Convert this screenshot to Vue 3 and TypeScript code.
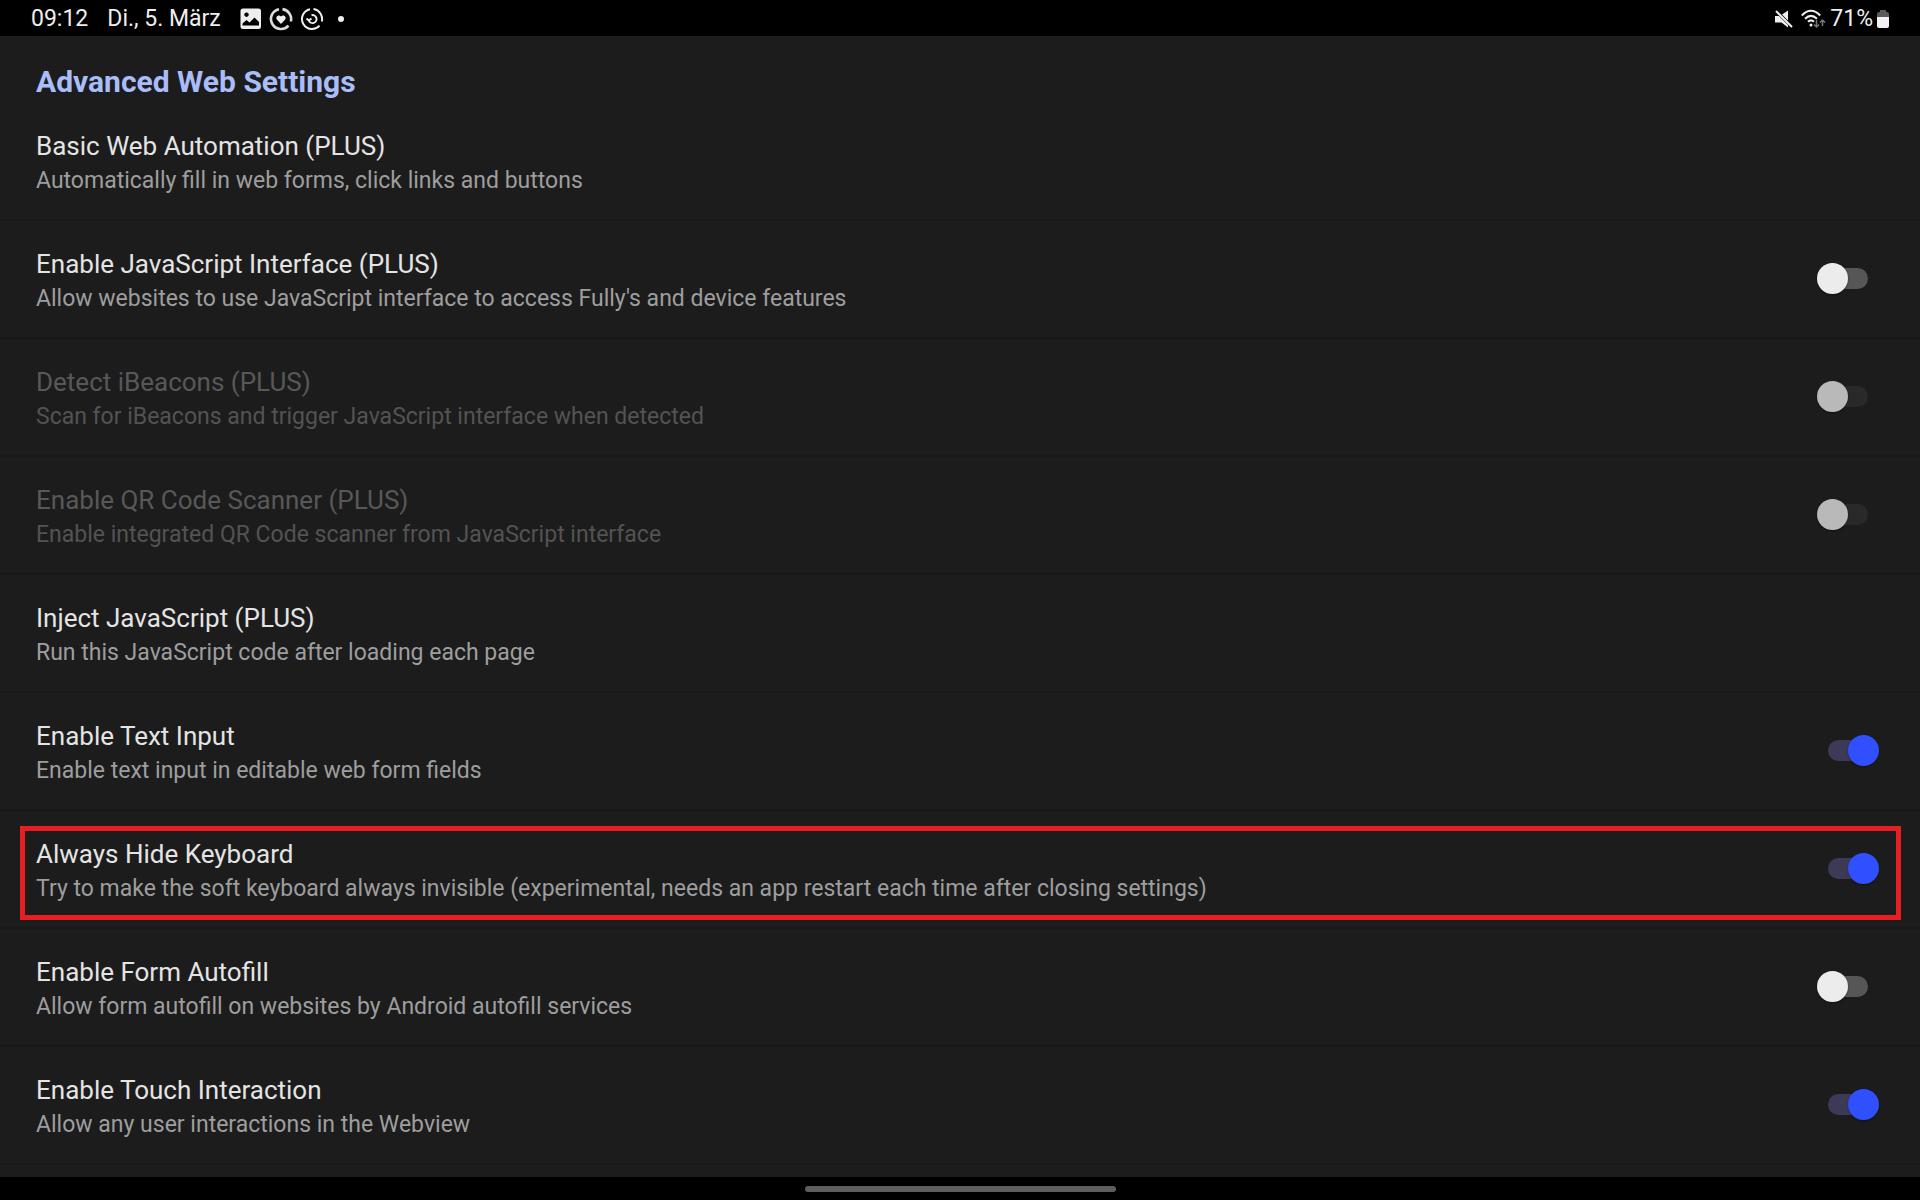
<script setup lang="ts">
import { ref } from 'vue'

interface Setting {
  id: string
  title: string
  summary: string
  checked?: boolean
  disabled?: boolean
  highlighted?: boolean
}

const settings = ref<Setting[]>([
  { id: 'automation', title: 'Basic Web Automation (PLUS)', summary: 'Automatically fill in web forms, click links and buttons' },
  { id: 'js-interface', title: 'Enable JavaScript Interface (PLUS)', summary: "Allow websites to use JavaScript interface to access Fully's and device features", checked: false },
  { id: 'ibeacons', title: 'Detect iBeacons (PLUS)', summary: 'Scan for iBeacons and trigger JavaScript interface when detected', checked: false, disabled: true },
  { id: 'qr', title: 'Enable QR Code Scanner (PLUS)', summary: 'Enable integrated QR Code scanner from JavaScript interface', checked: false, disabled: true },
  { id: 'inject', title: 'Inject JavaScript (PLUS)', summary: 'Run this JavaScript code after loading each page' },
  { id: 'text-input', title: 'Enable Text Input', summary: 'Enable text input in editable web form fields', checked: true },
  { id: 'hide-keyboard', title: 'Always Hide Keyboard', summary: 'Try to make the soft keyboard always invisible (experimental, needs an app restart each time after closing settings)', checked: true, highlighted: true },
  { id: 'autofill', title: 'Enable Form Autofill', summary: 'Allow form autofill on websites by Android autofill services', checked: false },
  { id: 'touch', title: 'Enable Touch Interaction', summary: 'Allow any user interactions in the Webview', checked: true },
])
</script>

<template>
  <div class="screen">
    <header class="status">
      <time class="clock">09:12</time>
      <span class="date">Di., 5. März</span>
      <div class="notifications">
        <svg width="22" height="22" viewBox="0 0 22 22" aria-hidden="true">
          <path fill="#eee" fill-rule="evenodd" d="M3 .5H18.500Q21 .5 21 3V18.500Q21 21 18.500 21H3Q.5 21 .5 18.500V3Q.5 .5 3 .5ZM6.500 4.500a2.200 2.200 0 1 0 .01 0ZM2.500 17.500H19V14L14.500 9.500L9.500 14.500L6.500 12L2.500 15.500Z" />
        </svg>
        <svg width="24" height="24" viewBox="0 0 24 24" fill="none" aria-hidden="true">
          <path stroke="#dcdcdc" stroke-width="2.600" d="M10 2.200A10 10 0 1 0 19.500 18.600M21.800 14.500A10 10 0 0 0 13.500 2.100" />
          <path fill="#eee" d="M12 17L8 12.800C5.800 10.300 9.500 6.800 12 9.600C14.500 6.800 18.200 10.300 16 12.800Z" />
        </svg>
        <svg width="24" height="24" viewBox="0 0 24 24" fill="none" stroke="#eee" stroke-width="2" aria-hidden="true">
          <path d="M10 2.200A10 10 0 1 0 19.500 18.600M21.800 14.500A10 10 0 0 0 13.500 2.100" />
          <path d="M11.500 8.200A4 4 0 1 1 8.800 13.500M6.500 11.500L8.800 13.500L11.500 11.500" />
        </svg>
        <span class="dot"></span>
      </div>
      <div class="system">
        <svg width="18" height="18" viewBox="0 0 18 18" aria-hidden="true">
          <path fill="#eee" d="M0 6H4L13 15V17.500L6.500 12.500H0ZM7 4.500L13 .5V10.500Z" />
          <path stroke="#eee" stroke-width="2" d="M1 1L17 17" />
        </svg>
        <svg class="wifi" width="25" height="20" viewBox="0 0 25 20" fill="none" aria-hidden="true">
          <path stroke="#eee" stroke-width="2" d="M.8 6.500Q10 -3 19.200 6.500M4 9.800Q10 4 16 9.800M7 12.800Q10 10 13 12.800" />
          <circle cx="10" cy="16" r="1.500" fill="#eee" />
          <path stroke="#777" stroke-width="1.500" d="M15.500 11V18M13 15.500L15.500 18L18 15.500M21.500 17V11M19 13.500L21.500 11L24 13.500" />
        </svg>
        <span class="percent">71%</span>
        <svg width="12" height="18" viewBox="0 0 12 18" aria-hidden="true">
          <path fill="#5a5a5a" d="M3 0H9V2H10Q12 2 12 4V8H0V4Q0 2 2 2H3Z" />
          <path fill="#f2f2f2" d="M0 7H12V16Q12 18 10 18H2Q0 18 0 16Z" />
        </svg>
      </div>
    </header>

    <main class="content">
      <h1 class="heading">Advanced Web Settings</h1>
      <ul class="list">
        <li
          v-for="item in settings"
          :key="item.id"
          class="row"
          :class="{ disabled: item.disabled, highlighted: item.highlighted }"
        >
          <label class="setting" :for="item.checked === undefined ? undefined : item.id">
            <span class="title">{{ item.title }}</span>
            <span class="summary">{{ item.summary }}</span>
          </label>
          <input
            v-if="item.checked !== undefined"
            :id="item.id"
            v-model="item.checked"
            class="switch"
            type="checkbox"
            role="switch"
            :disabled="item.disabled"
          />
        </li>
      </ul>
    </main>

    <footer class="navigation"><span class="handle"></span></footer>
  </div>
</template>

<style>
body {
  margin: 0;
  background: #000;
}
</style>

<style scoped>
.screen {
  display: flex;
  flex-direction: column;
  min-height: 100vh;
  background: #1c1c1c;
  color: #e4e4e4;
  font-family: Roboto, sans-serif;
}
.status {
  display: flex;
  align-items: center;
  box-sizing: border-box;
  height: 36px;
  padding: 2px 31px 0;
  background: #000;
  color: #eee;
  font-size: 23px;
  line-height: 34px;
}
.date {
  margin-left: 19px;
}
.notifications {
  display: flex;
  align-items: center;
  gap: 7px;
  margin-left: 19px;
}
.dot {
  width: 6px;
  height: 6px;
  margin-left: 7px;
  border-radius: 50%;
  background: #eee;
}
.system {
  display: flex;
  align-items: center;
  margin-left: auto;
}
.wifi {
  margin: 0 4px 0 8px;
}
.percent {
  margin-right: 4px;
}
.content {
  flex: 1;
}
.heading {
  margin: 0;
  padding: 26px 36px 1px;
  color: #a9bdf9;
  font-size: 30px;
  font-weight: 700;
  line-height: 40px;
}
.list {
  margin: 0;
  padding: 0;
  list-style: none;
}
.row {
  position: relative;
  display: flex;
  align-items: center;
  box-sizing: border-box;
  min-height: 118px;
  padding: 0 41px 2px 36px;
  border-bottom: 2px solid #191919;
}
.setting {
  display: flex;
  flex: 1;
  flex-direction: column;
  gap: 1px;
  padding-top: 7px;
}
.title {
  font-size: 26px;
  line-height: 34px;
}
.summary {
  color: #9e9e9e;
  font-size: 23px;
  line-height: 34px;
}
.disabled .title {
  color: #585858;
}
.disabled .summary {
  color: #535353;
}
.highlighted::after {
  position: absolute;
  inset: 15px 19px 7px 20px;
  border: 5px solid #e81e25;
  content: '';
  pointer-events: none;
}
.switch {
  display: grid;
  align-items: center;
  width: 62px;
  height: 31px;
  margin: 0;
  appearance: none;
}
.switch::before,
.switch::after {
  grid-area: 1 / 1;
  content: '';
}
.switch::before {
  justify-self: center;
  width: 40px;
  height: 21px;
  border-radius: 11px;
  background: #565656;
}
.switch::after {
  width: 31px;
  height: 31px;
  border-radius: 50%;
  background: #ececec;
  box-shadow: 0 1px 2px rgb(0 0 0 / 40%);
}
.switch:checked::before {
  background: #3d3a57;
}
.switch:checked::after {
  justify-self: end;
  background: #304ffe;
}
.switch:disabled::before {
  background: #292929;
}
.switch:disabled::after {
  background: #b9b9b9;
}
.navigation {
  display: flex;
  align-items: center;
  justify-content: center;
  height: 23px;
  background: #000;
}
.handle {
  width: 311px;
  height: 6px;
  border-radius: 3px;
  background: #5d5d5d;
}
</style>
